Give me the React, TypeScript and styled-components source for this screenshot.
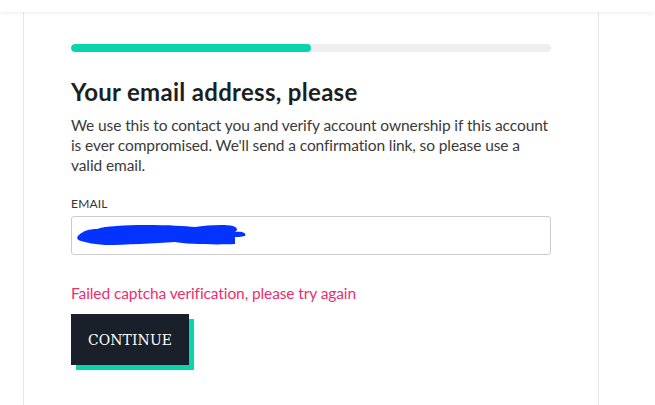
import React from "react";
import styled, { createGlobalStyle } from "styled-components";

const Global = createGlobalStyle`
  html, body { margin: 0; padding: 0; background: #ffffff; }
  body { font-family: "Lato", "Noto Sans", sans-serif; color: #222; }
  #root { min-height: 405px; }
`;

const Page = styled.div`
  display: flex;
  flex-direction: column;
  height: 405px;
  overflow: hidden;
`;

const TopBar = styled.header`
  height: 12px;
  background: #fff;
  box-shadow: 0 1px 5px rgba(0, 0, 0, 0.07);
  position: relative;
  z-index: 1;
  flex: none;
`;

const Card = styled.main`
  margin-left: 23px;
  width: 576px;
  box-sizing: border-box;
  border-left: 1px solid #e6e6e6;
  border-right: 1px solid #e6e6e6;
  padding: 32px 47px 0 47px;
  flex: 1;
  display: flex;
  flex-direction: column;
`;

const Track = styled.div`
  height: 8px;
  border-radius: 4px;
  background: #eeeeee;
  overflow: hidden;
`;

const Fill = styled.div`
  height: 100%;
  background: #07d6ad;
  border-radius: 4px;
`;

const Title = styled.h1`
  margin: 25px 0 0 0;
  font-size: 24px;
  line-height: 30px;
  font-weight: 700;
  letter-spacing: 0.3px;
  color: #1b1f24;
`;

const Lead = styled.p`
  margin: 8px 0 0 0;
  font-size: 15.5px;
  line-height: 20px;
  letter-spacing: -0.1px;
  color: #3a3a3a;
`;

const Label = styled.label`
  margin-top: 22px;
  font-size: 12px;
  line-height: 14px;
  color: #333;
  letter-spacing: 0.2px;
`;

const Field = styled.div`
  position: relative;
  margin-top: 5px;
  height: 39px;
  box-sizing: border-box;
  border: 1px solid #cccccc;
  border-radius: 3px;
  background: #fff;
`;

const Redaction = styled.svg`
  position: absolute;
  left: 3px;
  top: 5px;
`;

const ErrorText = styled.div`
  margin-top: 28px;
  font-size: 15.5px;
  line-height: 20px;
  letter-spacing: -0.1px;
  color: #ee2d6d;
`;

const ButtonWrap = styled.div`
  margin-top: 11px;
  display: flex;
`;

const Button = styled.button`
  width: 118px;
  height: 51px;
  border: none;
  border-radius: 0;
  background: #1a2029;
  color: #fff;
  box-shadow: 5px 5px 0 #07d6ad;
  font-family: "DejaVu Serif Condensed", "DejaVu Serif", serif;
  font-size: 15.5px;
  letter-spacing: 0.1px;
  padding: 0;
  cursor: pointer;
`;

export default function App() {
  const progress = 50;
  return (
    <>
      <Global />
      <Page>
        <TopBar />
        <Card>
          <Track>
            <Fill style={{ width: `${progress}%` }} />
          </Track>
          <Title>Your email address, please</Title>
          <Lead>
            We use this to contact you and verify account ownership if this account
            is ever compromised. We'll send a confirmation link, so please use a
            valid email.
          </Lead>
          <Label>EMAIL</Label>
          <Field>
            <Redaction width="176" height="26" viewBox="0 0 176 26">
              <path
                d="M4 13 C8 9 14 7 22 7 C30 4 50 3 70 3 C95 3 110 4 120 5 C132 3 150 2 158 4 C163 6 163 8 160 10 C167 9 172 11 170 14 C166 15 162 15 160 15 L160 22 C140 23 110 22 100 20 C80 21 50 23 30 23 C20 22 12 21 6 19 C2 18 1 15 4 13 Z"
                fill="#0433ff"
              />
            </Redaction>
          </Field>
          <ErrorText>Failed captcha verification, please try again</ErrorText>
          <ButtonWrap>
            <Button>CONTINUE</Button>
          </ButtonWrap>
        </Card>
      </Page>
    </>
  );
}
